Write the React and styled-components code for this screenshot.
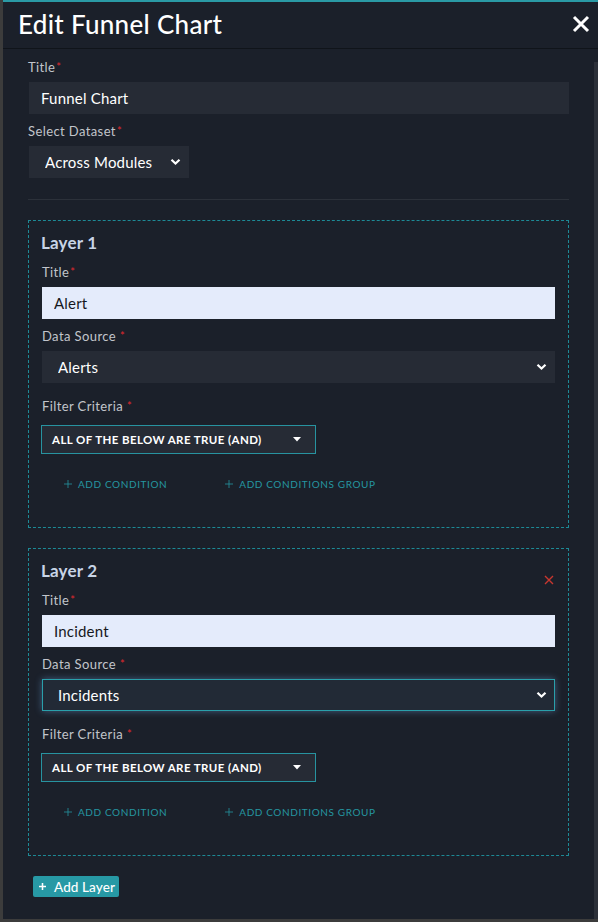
import React from 'react';
import styled, { createGlobalStyle, css } from 'styled-components';

const GlobalStyle = createGlobalStyle`
  html, body {
    margin: 0;
    padding: 0;
    background: #3c3c3c;
    font-family: Lato, "Open Sans", sans-serif;
  }
  * { box-sizing: border-box; }
`;

const Page = styled.div`
  height: 922px;
  padding-left: 3px;
  overflow: hidden;
`;

const Modal = styled.div`
  height: 919px;
  background: #1b202a;
  border-top: 2px solid #2a9aa5;
  display: flex;
  flex-direction: column;
`;

const Header = styled.div`
  height: 47px;
  display: flex;
  align-items: center;
  justify-content: space-between;
  padding: 0 7px 2px 15px;
  border-bottom: 1px solid #10141a;
`;

const Heading = styled.h1`
  margin: 0;
  font-size: 26px;
  font-weight: 500;
  color: #fff;
  letter-spacing: 0.3px;
`;

const CloseButton = styled.button`
  background: none;
  border: none;
  padding: 0;
  width: 20px;
  height: 20px;
  display: flex;
  align-items: center;
  justify-content: center;
  cursor: pointer;
`;

const BodyRow = styled.div`
  flex: 1;
  display: flex;
`;

const Body = styled.div`
  flex: 1;
  padding: 10px 25px 0 25px;
`;

const Track = styled.div`
  width: 4px;
  margin-top: 13px;
  background: #2c3039;
`;

const Field = styled.div`
  display: flex;
  flex-direction: column;
  margin-bottom: ${p => p.$gap ?? 9}px;
`;

const Label = styled.label`
  font-size: 13px;
  line-height: 16px;
  color: #c2c5cb;
  margin-bottom: ${p => p.$space || 7}px;
  letter-spacing: 0.4px;
`;

const Star = styled.span`
  color: #e0282e;
  font-size: 11px;
  vertical-align: top;
  margin-left: ${p => (p.$spaced ? 4 : 1)}px;
`;

const TextInput = styled.input`
  height: 32px;
  border: none;
  outline: none;
  padding: 0 12px;
  font-family: inherit;
  font-size: 15px;
  letter-spacing: 0.2px;
  ${p => p.$light
    ? css`
        background: #e4ebfb;
        color: #16181d;
      `
    : css`
        background: #262b35;
        color: #fff;
        margin-left: 1px;
        width: calc(100% - 1px);
      `}
`;

const SelectWrap = styled.div`
  position: relative;
  width: ${p => p.$width || '100%'};
  margin-left: ${p => p.$offset || 0}px;
`;

const Select = styled.select`
  appearance: none;
  width: 100%;
  height: 32px;
  padding: 0 30px 0 15px;
  font-family: inherit;
  font-size: 15px;
  letter-spacing: 0.2px;
  color: #fff;
  background: #262b35;
  border: 1px solid transparent;
  outline: none;
  ${p => p.$focused && css`
    background: #222a36;
    border-color: #2aa0ab;
    box-shadow: 0 0 7px rgba(110, 170, 230, 0.45);
  `}
`;

const Chevron = styled.svg`
  position: absolute;
  right: 8px;
  top: 50%;
  margin-top: -4px;
  pointer-events: none;
`;

const Divider = styled.hr`
  border: none;
  border-top: 1px solid #2c313a;
  margin: 21px 0 20px;
`;

const LayerBox = styled.div`
  position: relative;
  border: 1px dashed #1d8a96;
  padding: 12px 13px 0 12px;
  height: ${p => p.$height}px;
  margin-bottom: 20px;
`;

const LayerTitle = styled.h3`
  margin: 0 0 11px;
  font-size: 17px;
  line-height: 20px;
  font-weight: 700;
  letter-spacing: 0.2px;
  color: #c8d4e6;
`;

const LayerBody = styled.div`
  padding-left: 1px;
`;

const RemoveButton = styled.button`
  position: absolute;
  top: 24px;
  right: 13px;
  width: 12px;
  height: 12px;
  padding: 0;
  background: none;
  border: none;
  cursor: pointer;
`;

const CriteriaButton = styled.button`
  width: 275px;
  height: 29px;
  margin-left: -1px;
  display: flex;
  align-items: center;
  justify-content: space-between;
  padding: 0 14px 0 10px;
  background: #262b35;
  border: 1px solid #2793a0;
  color: #fff;
  font-family: inherit;
  font-size: 11.5px;
  font-weight: 700;
  letter-spacing: 0.4px;
  text-transform: uppercase;
  cursor: pointer;
`;

const LinkRow = styled.div`
  display: flex;
  gap: 58px;
  margin-top: 24px;
  padding-left: 22px;
`;

const LinkButton = styled.button`
  display: flex;
  align-items: center;
  gap: 6px;
  background: none;
  border: none;
  padding: 0;
  color: #2596a1;
  font-family: inherit;
  font-size: 10px;
  letter-spacing: 0.6px;
  text-transform: uppercase;
  cursor: pointer;
`;

const AddLayerButton = styled.button`
  margin: 3px 0 0 5px;
  height: 21px;
  padding: 0 4px 0 6px;
  display: flex;
  align-items: center;
  gap: 8px;
  background: #2799a5;
  border: none;
  border-radius: 2px;
  color: #fff;
  font-family: inherit;
  font-size: 13.5px;
  font-weight: 500;
  letter-spacing: 0.1px;
  cursor: pointer;
`;

const ChevronIcon = () => (
  <Chevron width="11" height="8" viewBox="0 0 11 8">
    <path d="M1.5 1.8 L5.5 5.6 L9.5 1.8" fill="none" stroke="#fff" strokeWidth="2.2" />
  </Chevron>
);

const PlusIcon = ({ size = 8, color = '#2596a1', width = 1 }) => (
  <svg width={size} height={size} viewBox="0 0 10 10">
    <path d="M5 0 V10 M0 5 H10" stroke={color} strokeWidth={width} />
  </svg>
);

const layers = [
  { name: 'Layer 1', title: 'Alert', source: 'Alerts', removable: false },
  { name: 'Layer 2', title: 'Incident', source: 'Incidents', removable: true, focused: true },
];

function Layer({ layer }) {
  return (
    <LayerBox $height={308}>
      <LayerTitle>{layer.name}</LayerTitle>
      {layer.removable && (
        <RemoveButton aria-label="Remove layer">
          <svg width="10" height="10" viewBox="0 0 10 10">
            <path d="M1 1 L9 9 M9 1 L1 9" stroke="#c8372f" strokeWidth="1.4" />
          </svg>
        </RemoveButton>
      )}
      <LayerBody>
        <Field>
          <Label>Title<Star>*</Star></Label>
          <TextInput $light defaultValue={layer.title} />
        </Field>
        <Field $gap={15}>
          <Label>Data Source<Star $spaced>*</Star></Label>
          <SelectWrap>
            <Select $focused={layer.focused} defaultValue={layer.source}>
              <option>{layer.source}</option>
            </Select>
            <ChevronIcon />
          </SelectWrap>
        </Field>
        <Field $gap={0}>
          <Label $space={11}>Filter Criteria<Star $spaced>*</Star></Label>
          <CriteriaButton>
            <span>All of the below are true (and)</span>
            <svg width="8" height="5" viewBox="0 0 8 5">
              <path d="M0 0 H8 L4 4.5 Z" fill="#fff" />
            </svg>
          </CriteriaButton>
        </Field>
        <LinkRow>
          <LinkButton><PlusIcon />Add Condition</LinkButton>
          <LinkButton><PlusIcon />Add Conditions Group</LinkButton>
        </LinkRow>
      </LayerBody>
    </LayerBox>
  );
}

export default function App() {
  return (
    <>
      <GlobalStyle />
      <Page>
        <Modal>
          <Header>
            <Heading>Edit Funnel Chart</Heading>
            <CloseButton aria-label="Close">
              <svg width="18" height="18" viewBox="0 0 18 18">
                <path d="M2 2 L16 16 M16 2 L2 16" stroke="#fff" strokeWidth="3" />
              </svg>
            </CloseButton>
          </Header>
          <BodyRow>
            <Body>
              <Field>
                <Label>Title<Star>*</Star></Label>
                <TextInput defaultValue="Funnel Chart" />
              </Field>
              <Field $gap={0}>
                <Label>Select Dataset<Star>*</Star></Label>
                <SelectWrap $width="160px" $offset={1}>
                  <Select defaultValue="Across Modules">
                    <option>Across Modules</option>
                  </Select>
                  <ChevronIcon />
                </SelectWrap>
              </Field>
              <Divider />
              {layers.map(layer => (
                <Layer key={layer.name} layer={layer} />
              ))}
              <AddLayerButton>
                <PlusIcon size={7} color="#fff" width={2.2} />
                Add Layer
              </AddLayerButton>
            </Body>
            <Track />
          </BodyRow>
        </Modal>
      </Page>
    </>
  );
}
